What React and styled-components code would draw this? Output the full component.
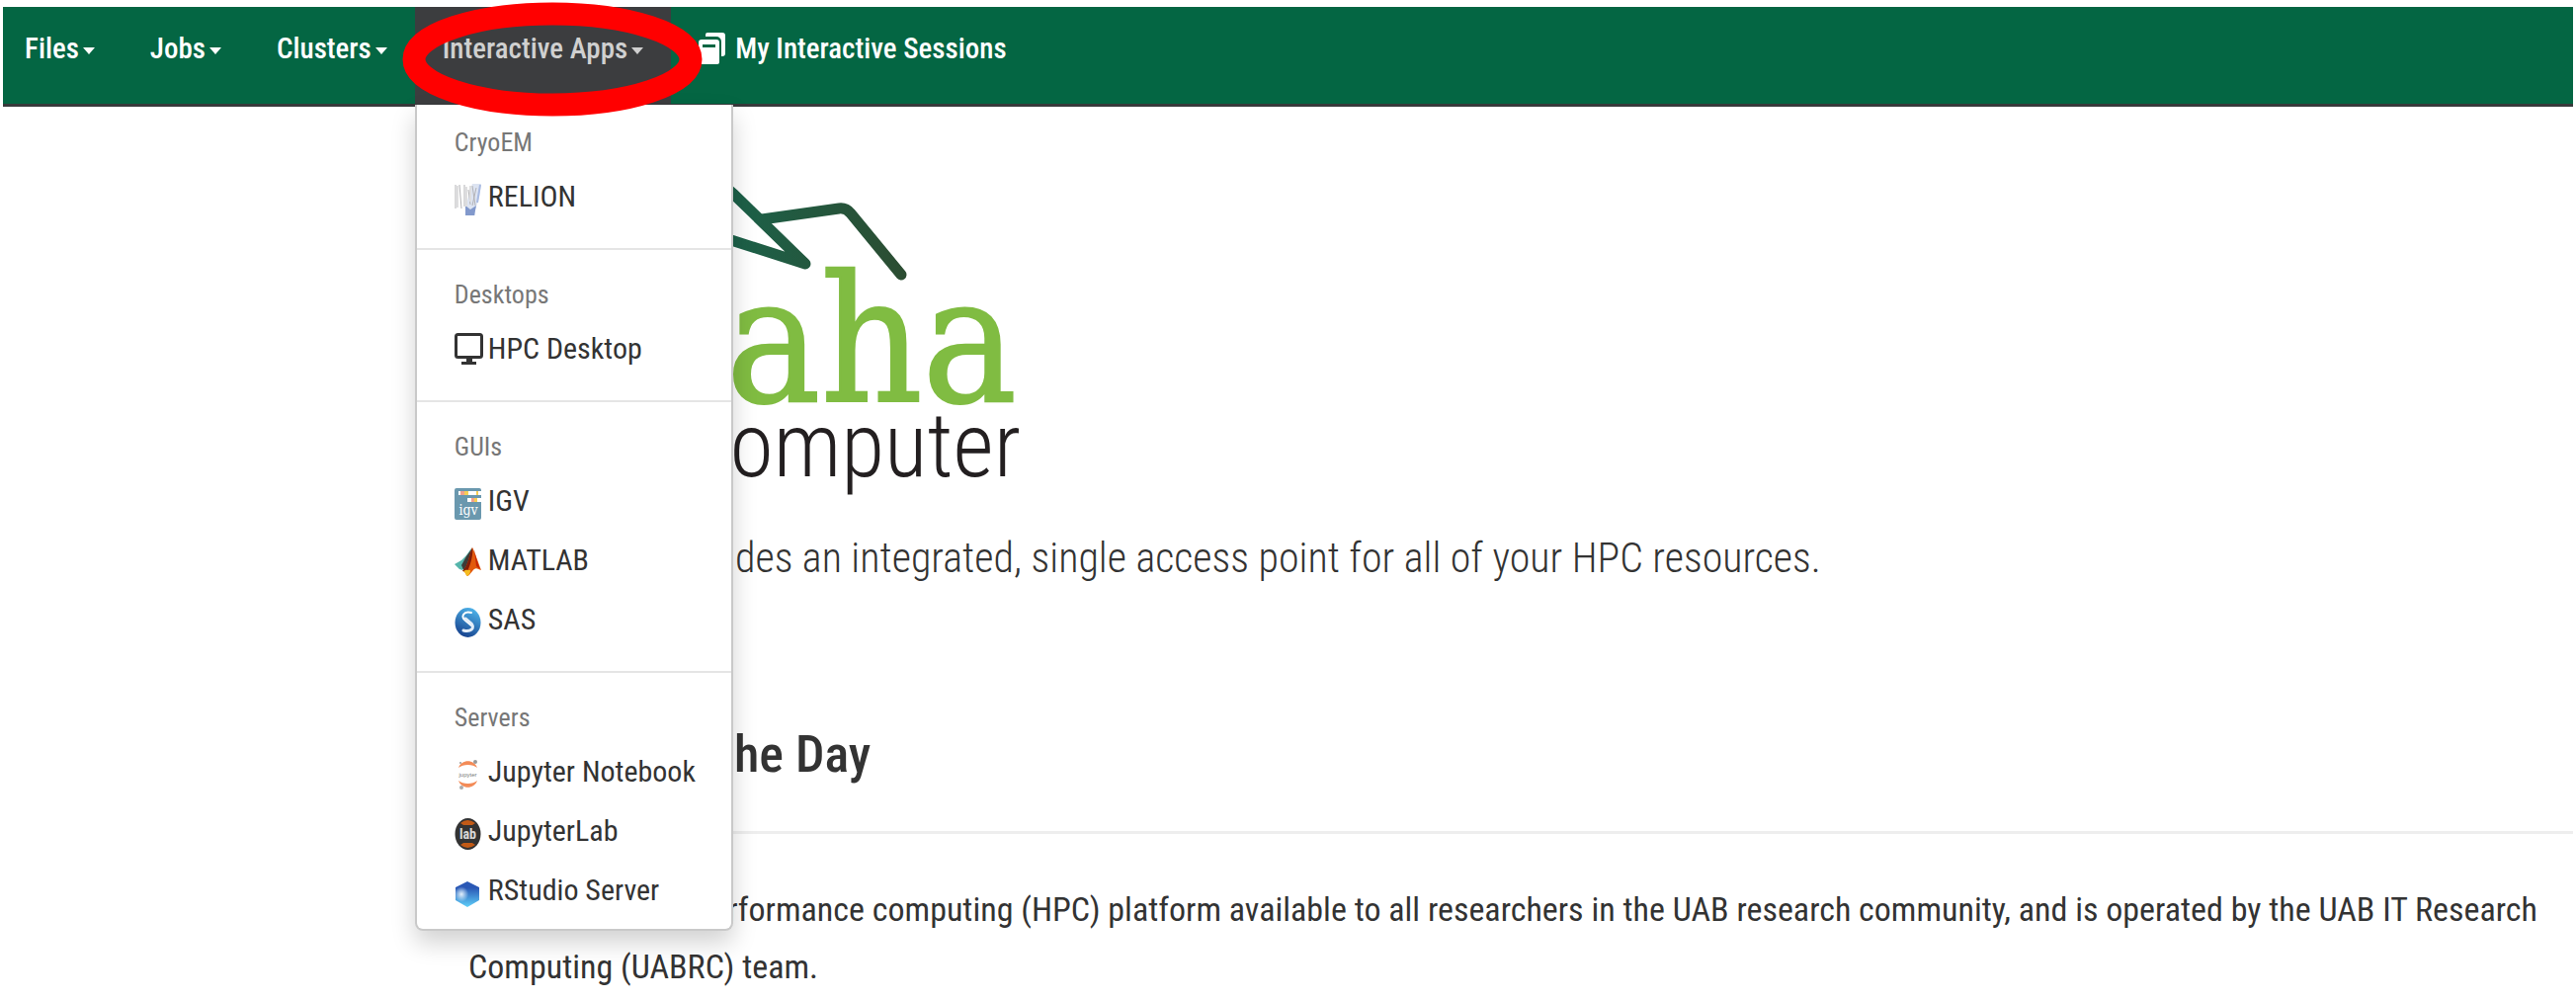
import React from "react";
import styled, { createGlobalStyle } from "styled-components";

const GlobalStyle = createGlobalStyle`
  *, *::before, *::after { box-sizing: border-box; }
  body {
    margin: 0;
    background: #fff;
    color: #333;
    font-family: "Roboto Condensed", "Liberation Sans", Arial, sans-serif;
    overflow-x: hidden;
  }
`;

const Page = styled.div`
  padding: 7px 3px 0;
`;

const NavBar = styled.nav`
  background: #046643;
  border-bottom: 3px solid #37393b;
`;

const NavList = styled.ul`
  display: flex;
  margin: 0;
  padding: 0;
  list-style: none;
`;

const NavItem = styled.li`
  position: relative;
`;

const NavControl = styled.button`
  display: flex;
  align-items: center;
  gap: ${(p) => (p.$icon ? "10px" : "4px")};
  padding: 21px 28px 35px ${(p) => (p.$first ? "22px" : "28px")};
  border: 0;
  background: ${(p) => (p.$open ? "#3c3d3f" : "transparent")};
  color: ${(p) => (p.$open ? "#d0d0d0" : "#fff")};
  font-family: inherit;
  font-size: 29px;
  font-weight: 500;
  line-height: 42px;
  white-space: nowrap;
  text-decoration: none;
  cursor: pointer;
`;

const Caret = styled.span`
  margin-top: 5px;
  border: 6px solid transparent;
  border-top: 7px solid currentColor;
  border-bottom: 0;
`;

const Highlight = styled.svg`
  position: absolute;
  z-index: 3;
  left: 50%;
  top: -5px;
  width: 304px;
  height: 116px;
  margin-left: -143px;
  pointer-events: none;
`;

const Menu = styled.div`
  position: absolute;
  z-index: 2;
  top: 100%;
  left: 0;
  width: 322px;
  margin-top: 1px;
  padding: 13px 0 9px;
  background: #fff;
  border: 2px solid #c9c9c9;
  border-top: 0;
  border-radius: 0 0 8px 8px;
  box-shadow: 0 12px 24px rgba(0, 0, 0, 0.18);
`;

const MenuSection = styled.section`
  & + & {
    margin-top: 22px;
    padding-top: 20px;
    border-top: 2px solid #e5e5e5;
  }
`;

const MenuHeading = styled.h2`
  margin: 0;
  padding: 0 38px;
  color: #777;
  font-size: 26px;
  font-weight: 400;
  line-height: 50px;
`;

const MenuLinks = styled.ul`
  margin: 0;
  padding: 0;
  list-style: none;
`;

const MenuLink = styled.a`
  display: flex;
  align-items: center;
  gap: 7px;
  height: 60px;
  padding: 0 0 0 38px;
  color: #333;
  font-size: 30px;
  line-height: 42px;
  white-space: nowrap;
  text-decoration: none;
`;

const IconBox = styled.svg`
  flex: none;
  width: 27px;
  height: 34px;
  margin-top: ${(p) => (p.$raised ? "0" : "6px")};
  overflow: visible;
`;

const Main = styled.main`
  padding: 62px 0 0 471px;
`;

const Logo = styled.svg`
  display: block;
  width: 564px;
  height: 340px;
`;

const Lead = styled.p`
  margin: 25px 0 0;
  font-size: 42px;
  font-weight: 300;
  line-height: 60px;
`;

const Heading = styled.h1`
  margin: 139px 0 0;
  font-size: 52px;
  font-weight: 500;
  line-height: 60px;
`;

const Rule = styled.hr`
  height: 3px;
  margin: 47px 0;
  border: 0;
  background: #eee;
`;

const Body = styled.p`
  margin: 0;
  padding-right: 20px;
  font-size: 34px;
  line-height: 58px;
`;

const SessionsIcon = () => (
  <svg width="27" height="34" viewBox="0 0 27 34" aria-hidden="true">
    <path d="M9 1h15a3 3 0 0 1 3 3v18a3 3 0 0 1-3 3h-1V10a5 5 0 0 0-5-5H7V3a2 2 0 0 1 2-2Z" fill="#fff" />
    <path
      d="M3 8h15a3 3 0 0 1 3 3v20a2 2 0 0 1-2 2H3a3 3 0 0 1-3-3V11a3 3 0 0 1 3-3Zm1 5v3h13v-3Z"
      fill="#fff"
      fillRule="evenodd"
    />
  </svg>
);

const RelionIcon = () => (
  <IconBox viewBox="0 0 27 34" aria-hidden="true">
    <path d="M18 1h9l-2 14-4 12v6H11v-8Z" fill="#dde4f2" />
    <path d="M11 23l5 4 6-4-2 10h-9Z" fill="#8299cc" />
    <path d="M1 2v24M5 2l2 24M10 2v22M14 7l2 15M18 3l3 20M22 5l-4 18" stroke="#b4b4b7" strokeWidth="1" fill="none" />
    <path d="M3 3v22M12 4v20M16 3v16" stroke="#dededf" strokeWidth="2" fill="none" />
    <path d="M26 2l-3 18" stroke="#a9bbe2" strokeWidth="2" />
  </IconBox>
);

const DesktopIcon = () => (
  <IconBox viewBox="0 0 27 34" $raised aria-hidden="true">
    <rect x="1.5" y="2.500" width="26" height="23" rx="2" fill="none" stroke="#333" strokeWidth="3" />
    <path d="M12 26h6v4h4v3H7v-3h5Z" fill="#333" />
  </IconBox>
);

const IgvIcon = () => (
  <IconBox viewBox="0 0 27 34" aria-hidden="true">
    <rect x="0" y="1" width="27" height="32" rx="2" fill="#6a98ae" />
    <path d="M4 4h23v4H4ZM13 11h14v4H13Z" fill="#fff" />
    <path d="M6 4h4v4H6ZM17 11h3v4h-3Z" fill="#f3a18b" />
    <path d="M10 4h4v4h-4ZM22 4h2v4h-2ZM20 11h3v4h-3Z" fill="#f6cf55" />
    <text x="14" y="28" textAnchor="middle" fontFamily="DejaVu Serif Condensed, serif" fontSize="14" fill="#fff">
      igv
    </text>
  </IconBox>
);

const MatlabIcon = () => (
  <IconBox viewBox="0 0 27 34" aria-hidden="true">
    <path d="M0 18l7-4 5-5 5-7-1 13-8 9-3-1Z" fill="#55b5ab" />
    <path d="M7 19l5-9 5-7-1 15-6 8Z" fill="#3d3b38" />
    <path d="M18 1c2 3 5 13 9 23-3-1-5-3-7-1-2 1-4 6-7 7-2-2-2-5-5-5 6-5 7-17 10-24Z" fill="#e2590c" />
    <path d="M18 1c1 6-1 16-5 24l-5 0c6-5 7-17 10-24Z" fill="#7f1c08" />
    <path d="M9 25c3-2 4-1 7-1 0 3-1 5-3 6-2-1-2-4-4-5Z" fill="#f6bd21" />
    <path d="M20 3c1 5 3 14 6 20l-4-3Z" fill="#c52508" />
  </IconBox>
);

const SasIcon = () => (
  <IconBox viewBox="0 0 27 34" aria-hidden="true">
    <defs>
      <linearGradient id="sas-fill" x1="0.700" y1="0" x2="0.300" y2="1">
        <stop offset="0" stopColor="#4fb4ea" />
        <stop offset="1" stopColor="#153f8c" />
      </linearGradient>
    </defs>
    <ellipse cx="13.500" cy="17" rx="13" ry="15" fill="url(#sas-fill)" />
    <path d="M17 7C9 5 6 11 11 15l6 5" fill="none" stroke="#fff" strokeWidth="2" strokeLinecap="round" />
    <path d="M11 13l6 5c4 5-1 9-8 7" fill="none" stroke="#e4eef9" strokeWidth="3" strokeLinecap="round" />
  </IconBox>
);

const JupyterIcon = () => (
  <IconBox viewBox="0 0 27 34" aria-hidden="true">
    <path d="M4 10c3-9 16-9 19 0-5-4-14-4-19 0Z" fill="#f38b57" />
    <path d="M4 23c3 9 16 9 19 0-5 4-14 4-19 0Z" fill="#f38b57" />
    <text x="13.500" y="19" textAnchor="middle" fontFamily="Liberation Sans, sans-serif" fontSize="6" fill="#777">
      jupyter
    </text>
    <circle cx="21" cy="4" r="2" fill="#999" />
    <circle cx="6" cy="5" r="1" fill="#999" />
    <circle cx="7" cy="30" r="2" fill="#aaa" />
  </IconBox>
);

const LabIcon = () => (
  <IconBox viewBox="0 0 27 34" aria-hidden="true">
    <ellipse cx="13.500" cy="17" rx="13" ry="16" fill="#333" />
    <path d="M6 6q7-6 15 0l-3 2H9ZM6 28q7 6 15 0l-3-2H9Z" fill="#c25a16" />
    <text x="13.500" y="22" textAnchor="middle" fontFamily="Roboto Condensed, sans-serif" fontSize="14" fontWeight="700" fill="#d8d8d8">
      lab
    </text>
  </IconBox>
);

const RStudioIcon = () => (
  <IconBox viewBox="0 0 27 34" aria-hidden="true">
    <defs>
      <linearGradient id="rstudio-fill" x1="0" y1="0" x2="0" y2="1">
        <stop offset="0.250" stopColor="#2a58b5" />
        <stop offset="1" stopColor="#5fd0fa" />
      </linearGradient>
      <radialGradient id="rstudio-shine" cx="0.250" cy="0.500" r="0.300">
        <stop offset="0" stopColor="#e2effb" />
        <stop offset="1" stopColor="#e2effb" stopOpacity="0" />
      </radialGradient>
    </defs>
    <path d="M13 5l12 6v13l-12 7-12-7V11Z" fill="url(#rstudio-fill)" />
    <path d="M13 5l12 6v13l-12 7-12-7V11Z" fill="url(#rstudio-shine)" />
  </IconBox>
);

const CheahaLogo = () => (
  <Logo viewBox="473 170 564 340" role="img" aria-label="Cheaha Supercomputer">
    <defs>
      <linearGradient id="ridge" gradientUnits="userSpaceOnUse" x1="740" y1="0" x2="920" y2="0">
        <stop offset="0" stopColor="#1c6149" />
        <stop offset="1" stopColor="#2c4c31" />
      </linearGradient>
    </defs>
    <g fill="none" stroke="url(#ridge)" strokeWidth="11" strokeLinecap="round" strokeLinejoin="round">
      <path d="M600 290L690 178Q704 168 718 176L742 197L814 267L742 244L650 214" />
      <path d="M770 222L848 211Q855 210 860 216L911 278" />
    </g>
    <text
      x="1028"
      y="406"
      textAnchor="end"
      fontFamily="DejaVu Serif Condensed, DejaVu Serif, serif"
      fontSize="178"
      fill="#80bc42"
      stroke="#80bc42"
      strokeWidth="2"
    >
      aha
    </text>
    <text x="1032" y="482" textAnchor="end" fontFamily="Roboto Condensed, sans-serif" fontSize="90" fontWeight="300" fill="#231f20">
      Supercomputer
    </text>
  </Logo>
);

const sections = [
  { title: "CryoEM", apps: [["RELION", RelionIcon]] },
  { title: "Desktops", apps: [["HPC Desktop", DesktopIcon]] },
  { title: "GUIs", apps: [["IGV", IgvIcon], ["MATLAB", MatlabIcon], ["SAS", SasIcon]] },
  {
    title: "Servers",
    apps: [["Jupyter Notebook", JupyterIcon], ["JupyterLab", LabIcon], ["RStudio Server", RStudioIcon]],
  },
];

const AppsMenu = () => (
  <Menu>
    {sections.map((section) => (
      <MenuSection key={section.title}>
        <MenuHeading>{section.title}</MenuHeading>
        <MenuLinks>
          {section.apps.map(([name, Icon]) => (
            <li key={name}>
              <MenuLink href="#">
                <Icon />
                {name}
              </MenuLink>
            </li>
          ))}
        </MenuLinks>
      </MenuSection>
    ))}
  </Menu>
);

export default function App() {
  return (
    <>
      <GlobalStyle />
      <Page>
        <NavBar>
          <NavList>
            {["Files", "Jobs", "Clusters"].map((label, i) => (
              <NavItem key={label}>
                <NavControl type="button" $first={i === 0}>
                  {label}
                  <Caret />
                </NavControl>
              </NavItem>
            ))}
            <NavItem>
              <NavControl type="button" $open aria-expanded="true">
                Interactive Apps
                <Caret />
              </NavControl>
              <AppsMenu />
              <Highlight viewBox="0 0 304 116" aria-hidden="true">
                <ellipse cx="152" cy="58" rx="140" ry="46" fill="none" stroke="#f00" strokeWidth="23" />
              </Highlight>
            </NavItem>
            <NavItem>
              <NavControl as="a" href="#" $icon>
                <SessionsIcon />
                My Interactive Sessions
              </NavControl>
            </NavItem>
          </NavList>
        </NavBar>
        <Main>
          <CheahaLogo />
          <Lead>OnDemand provides an integrated, single access point for all of your HPC resources.</Lead>
          <Heading>Message of the Day</Heading>
          <Rule />
          <Body>
            Cheaha is a high-performance computing (HPC) platform available to all researchers in the UAB research
            community, and is operated by the UAB IT Research Computing (UABRC) team.
          </Body>
        </Main>
      </Page>
    </>
  );
}
